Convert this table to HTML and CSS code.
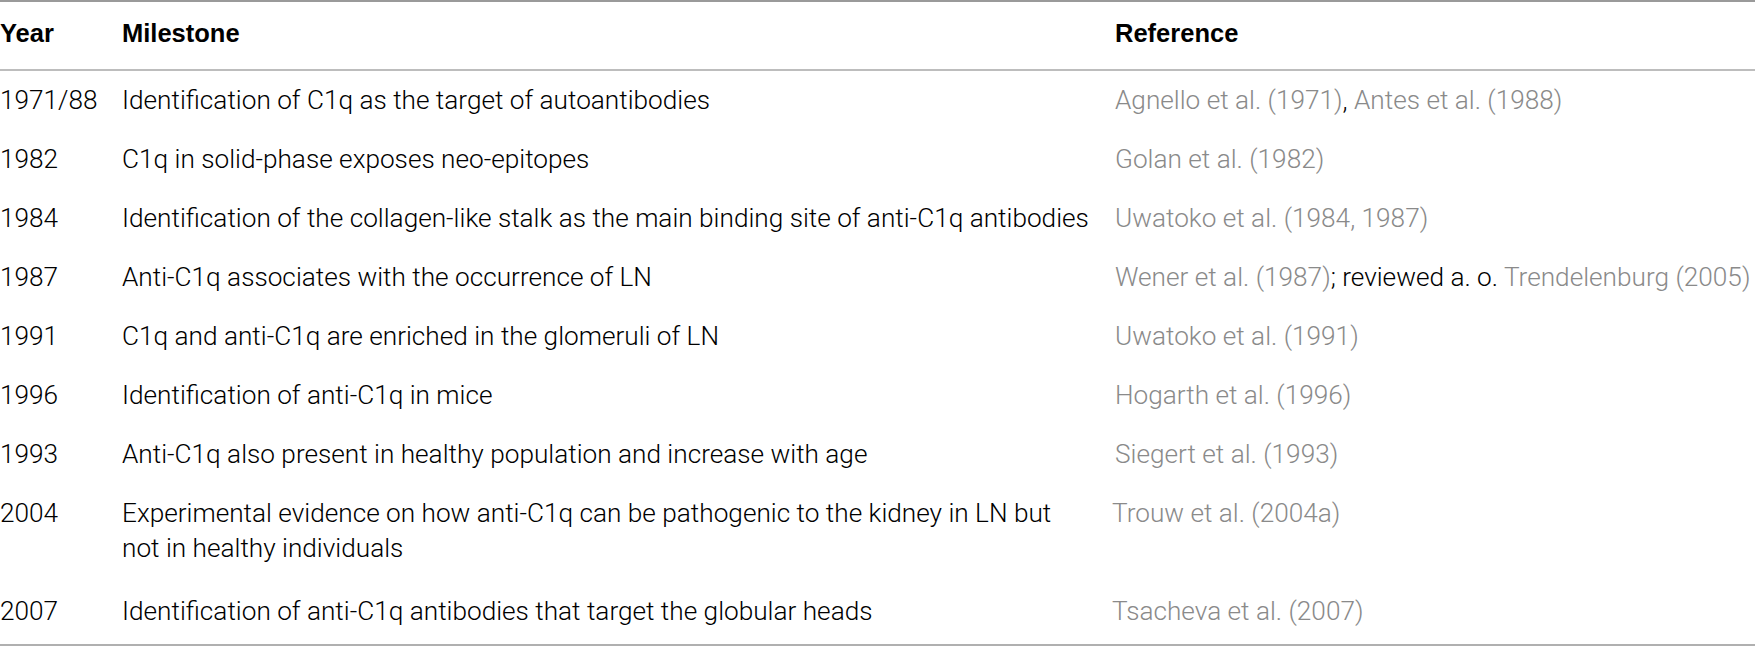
FILE: index.html
```html
<!DOCTYPE html>
<html>
<head>
<meta charset="utf-8">
<link rel="stylesheet" href="styles.css">
</head>
<body>
<table class="tbl">
  <colgroup>
    <col class="c-year">
    <col class="c-mile">
    <col class="c-ref">
  </colgroup>
  <thead>
    <tr><th>Year</th><th>Milestone</th><th>Reference</th></tr>
  </thead>
  <tbody>
    <tr><td>1971/88</td><td>Identification of C1q as the target of autoantibodies</td><td><span class="cite">Agnello et al. (1971)</span>, <span class="cite">Antes et al. (1988)</span></td></tr>
    <tr><td>1982</td><td>C1q in solid-phase exposes neo-epitopes</td><td><span class="cite">Golan et al. (1982)</span></td></tr>
    <tr><td>1984</td><td>Identification of the collagen-like stalk as the main binding site of anti-C1q antibodies</td><td><span class="cite">Uwatoko et al. (1984, 1987)</span></td></tr>
    <tr><td>1987</td><td>Anti-C1q associates with the occurrence of LN</td><td><span class="cite">Wener et al. (1987)</span>; reviewed a. o. <span class="cite">Trendelenburg (2005)</span></td></tr>
    <tr><td>1991</td><td>C1q and anti-C1q are enriched in the glomeruli of LN</td><td><span class="cite">Uwatoko et al. (1991)</span></td></tr>
    <tr><td>1996</td><td>Identification of anti-C1q in mice</td><td><span class="cite">Hogarth et al. (1996)</span></td></tr>
    <tr><td>1993</td><td>Anti-C1q also present in healthy population and increase with age</td><td><span class="cite">Siegert et al. (1993)</span></td></tr>
    <tr><td>2004</td><td>Experimental evidence on how anti-C1q can be pathogenic to the kidney in LN but<br>not in healthy individuals</td><td class="shift"><span class="cite">Trouw et al. (2004a)</span></td></tr>
    <tr><td>2007</td><td>Identification of anti-C1q antibodies that target the globular heads</td><td class="shift"><span class="cite">Tsacheva et al. (2007)</span></td></tr>
  </tbody>
</table>
</body>
</html>
```
FILE: styles.css
```css
html, body {
  margin: 0;
  padding: 0;
  background: #fff;
}
body {
  font-family: Roboto, "Liberation Sans", Arial, sans-serif;
  font-weight: 300;
  color: #000;
  overflow: hidden;
}
.tbl {
  width: 1755px;
  border-collapse: collapse;
  border-top: 2px solid #9a9a9a;
  border-bottom: 2px solid #b0b0b0;
  font-size: 26.2px;
  line-height: 35px;
}
.c-year { width: 122px; }
.c-mile { width: 993px; }
.c-ref { width: 640px; }
th {
  text-align: left;
  font-family: "Liberation Sans", Arial, sans-serif;
  font-weight: 700;
  font-size: 25.5px;
  color: #000;
  padding: 14px 0 18px 0;
  border-bottom: 2px solid #bdbdbd;
  white-space: nowrap;
}
td {
  text-align: left;
  vertical-align: top;
  padding: 12px 0 12px 0;
  white-space: nowrap;
}
tbody tr:last-child td {
  padding-top: 16px;
  padding-bottom: 15px;
}
.cite {
  color: #8a8a8a;
}
.shift {
  position: relative;
  left: -3px;
}
```
